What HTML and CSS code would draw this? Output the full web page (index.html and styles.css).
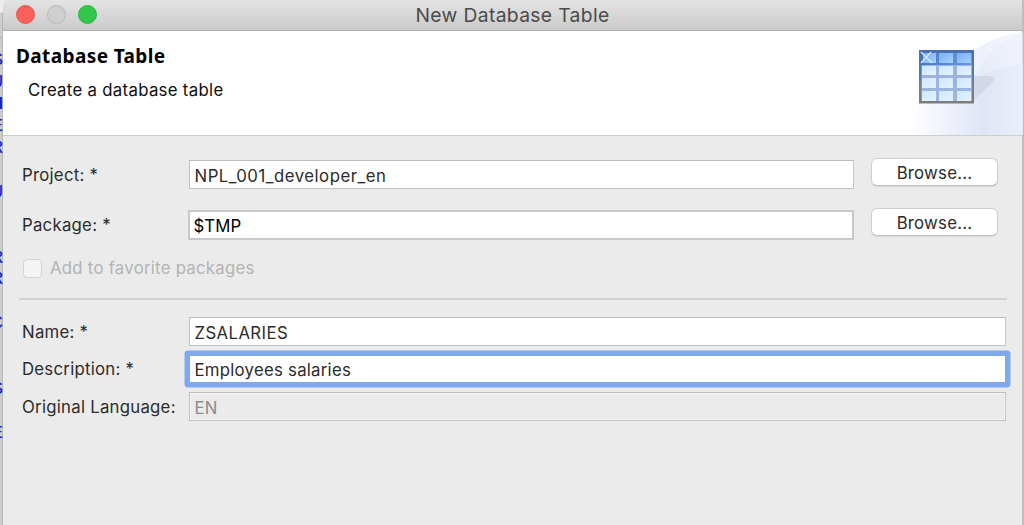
FILE: index.html
```html
<!DOCTYPE html>
<html lang="en">
<head>
<meta charset="utf-8">
<title>New Database Table</title>
<link rel="stylesheet" href="styles.css">
</head>
<body>
<div class="screen">
  <div class="editor" aria-hidden="true"><div class="code"><span class="dash">-</span>
S
U
<b>N</b>
E
R

U


R
R

C


S

E</div></div>
  <main class="dialog">
    <header class="titlebar">
      <div class="lights"><i class="light red"></i><i class="light off"></i><i class="light green"></i></div>
      <span class="title">New Database Table</span>
    </header>
    <section class="banner">
      <div class="intro">
        <h1>Database Table</h1>
        <p>Create a database table</p>
      </div>
      <svg class="art" width="139" height="104" viewBox="0 0 139 104">
        <defs>
          <linearGradient id="wave" x1="0" x2="1"><stop offset="0" stop-color="#fff"/><stop offset=".65" stop-color="#dce3f6"/><stop offset="1" stop-color="#e9eefa"/></linearGradient>
          <linearGradient id="frame" x1="0" x2="0" y1="0" y2="1"><stop offset="0" stop-color="#4a70b1"/><stop offset=".48" stop-color="#5279bb"/><stop offset=".66" stop-color="#77818e"/><stop offset="1" stop-color="#7d7d78"/></linearGradient>
          <linearGradient id="head" x1="0" x2="1"><stop offset="0" stop-color="#4a78c4"/><stop offset="1" stop-color="#6a9ae2"/></linearGradient>
          <linearGradient id="headcell" x1="0" x2="1" y1="0" y2="1"><stop offset="0" stop-color="#77aef2"/><stop offset="1" stop-color="#a9d2ff"/></linearGradient>
          <linearGradient id="cell" x1="0" x2="1" y1="0" y2="1"><stop offset="0" stop-color="#cfe7fc"/><stop offset="1" stop-color="#e4f3fd"/></linearGradient>
        </defs>
        <path d="M85 24C101 10 119 4 139 1V104H25C27 88 33 74 45 66Z" fill="url(#wave)" opacity=".5"/>
        <path d="M25 104C27 88 33 74 45 66L90 47C101 23 116 9 139 2V104Z" fill="url(#wave)" opacity=".35"/>
        <path d="M25 104C27 88 33 74 45 66L90 50C104 39 119 35 139 33V104Z" fill="url(#wave)" opacity=".75"/>
        <path d="M89 45H105Q113 45 109 51L89 70Z" fill="#ced4e4" opacity=".8"/>
        <path d="M35 19H90V72.5H35Z" fill="url(#frame)"/>
        <path d="M37.5 22H88V34H37.5Z" fill="url(#head)"/>
        <path d="M37.5 34H88V70H37.5Z" fill="#9cb4df"/>
        <g fill="url(#headcell)"><path d="M39 22h13v10H39z"/><path d="M55 22h14v10H55z"/><path d="M73 22h14v10H73z"/></g>
        <g fill="url(#cell)"><path d="M38 35h14v9H38z"/><path d="M55 35h14v9H55z"/><path d="M73 35h14v9H73z"/><path d="M38 47h14v10H38z"/><path d="M55 47h14v10H55z"/><path d="M73 47h14v10H73z"/><path d="M38 60h14v10H38z"/><path d="M55 60h14v10H55z"/><path d="M73 60h14v10H73z"/></g>
        <path d="M37 21L48 32M47 21L37 32" stroke="#d9eaff" stroke-width="1.3"/>
      </svg>
    </section>
    <section class="form">
      <div class="row project"><label>Project: *</label><div class="field"><span>NPL_001_developer_en</span></div><button>Browse...</button></div>
      <div class="row package"><label>Package: *</label><div class="field strong"><span>$TMP</span></div><button>Browse...</button></div>
      <div class="check"><i></i><span>Add to favorite packages</span></div>
      <div class="rule"></div>
      <div class="row name"><label>Name: *</label><div class="field"><span>ZSALARIES</span></div></div>
      <div class="row desc"><label>Description: *</label><div class="field focus"><span>Employees salaries</span></div></div>
      <div class="row lang"><label>Original Language:</label><div class="field disabled"><span>EN</span></div></div>
    </section>
  </main>
</div>
</body>
</html>
```
FILE: styles.css
```css
* { box-sizing: border-box; }
body { margin: 0; font: 16.75px/20px Inter, "Liberation Sans", sans-serif; letter-spacing: .26px; color: #2b2b2b; }
.screen { display: flex; width: 1024px; height: 525px; overflow: hidden; background: #bdbdbd; }
.editor { flex: none; width: 3px; height: 525px; padding-top: 28px; overflow: hidden; display: flex; justify-content: flex-end; background: linear-gradient(#eee 12px, transparent 13px), linear-gradient(90deg, #cdcdcd 2px, #b5b5b5 2px); }
.code { flex: none; white-space: pre; text-align: right; font: 18px/21.95px "Liberation Mono", monospace; letter-spacing: 0; color: #0b1fd0; }
.dash { color: #333; }
.dialog { flex: none; width: 1019px; height: 525px; background: #ebebeb; }
.titlebar { display: grid; grid-template-columns: 120px 1fr 120px; height: 31px; border-bottom: 1px solid #b0b0b0; border-top-left-radius: 5px; background: linear-gradient(#e3e3e3, #cbcbcb); }
.lights { display: flex; gap: 12px; padding: 5px 0 0 13px; }
.light { width: 19px; height: 19px; border-radius: 50%; }
.red { background: #fc605b; border: 1px solid #e65550; }
.off { background: #cfcfcf; border: 1px solid #b9b9b9; }
.green { background: #34c84a; border: 1px solid #2db541; }
.title { justify-self: center; padding-top: 5px; font-size: 19.25px; letter-spacing: .36px; color: #4b4b4b; white-space: nowrap; }
.banner { display: flex; justify-content: space-between; height: 105px; border-bottom: 1px solid #cecece; background: #fff; }
.intro { padding: 13px 0 0 13px; color: #0c0c0c; }
.art { margin-right: -1px; }
h1 { margin: 0; font: bold 19px/24px "Noto Sans", sans-serif; letter-spacing: .4px; color: #000; }
p { margin: 12px 0 0 12px; letter-spacing: .31px; }
.form { padding: 22px 16px 0 19px; }
.row { display: flex; align-items: flex-start; height: 28px; }
label { flex: none; width: 167px; padding-top: 6.5px; white-space: nowrap; }
.field { flex: 1; height: 28.5px; margin-top: 2px; padding: 5px 0 0 4.5px; border: 1px solid #c3c3c3; border-top-color: #bcbcbc; background: #fff; white-space: nowrap; }
.project .field { letter-spacing: .52px; }
.strong { height: 30px; margin: 2px -1px 0 -1px; padding: 4px 0 0 3.5px; border: 2px solid #c8c8c8; color: #000; letter-spacing: .1px; }
button { width: 127px; height: 28px; margin: 0 8px 0 17px; padding: 1px 0 0; border: 1px solid #cfcfcf; border-bottom-color: #bdbdbd; border-radius: 6px; background: #fff; box-shadow: 0 1px 1px #d8d8d8; font: inherit; letter-spacing: .24px; color: #2b2b2b; }
.package { margin-top: 22px; }
.package .field + button { margin-left: 18px; }
.check { display: flex; align-items: center; gap: 8px; height: 20px; margin-top: 22px; color: #b3b3b3; }
.check i { width: 19px; height: 19px; margin-left: 1px; border: 1px solid #d4d4d4; border-radius: 4px; background: #f4f4f4; }
.rule { height: 1.5px; margin: 20px -1px 0 -3px; background: #d2d2d2; }
.name { margin-top: 15.5px; }
.name .field, .desc .field, .lang .field { padding-top: 4.5px; }
.name .field { letter-spacing: .4px; }
.desc, .lang { margin-top: 9.5px; }
.desc label { padding-top: 6px; }
.focus { border-color: #7da9ec; box-shadow: 0 0 0 4.5px #7eaaed; border-radius: 1px; }
.disabled { background: #ebebeb; color: #8c8c8c; box-shadow: inset 0 0 0 1px #f5f5f5; letter-spacing: .1px; }
```
